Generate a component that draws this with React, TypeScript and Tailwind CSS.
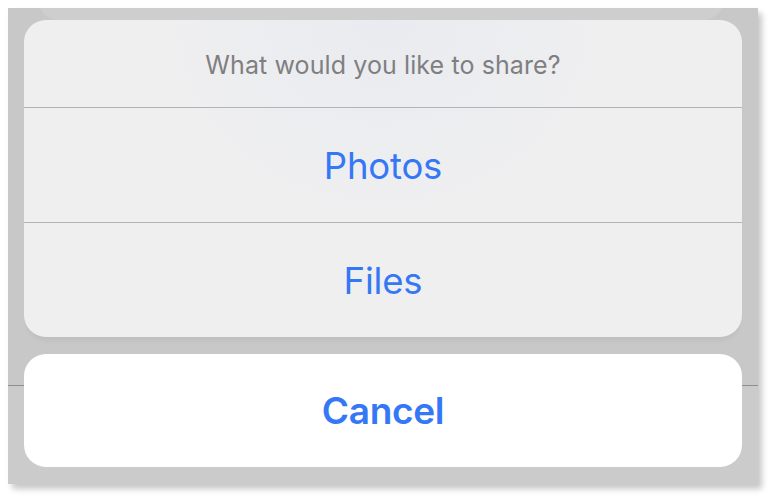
import React from 'react';

const font = { fontFamily: 'Inter, "Noto Sans", "Liberation Sans", sans-serif' };

const ActionRow: React.FC<{ label: string; last?: boolean }> = ({ label, last }) => (
  <button
    className={`flex w-full items-center justify-center pt-[3px] text-[36.5px] font-normal tracking-[-0.2px] text-[#3478f6] ${
      last ? 'h-[114px]' : 'h-[115px] border-b border-[#b3b3b5]'
    }`}
  >
    {label}
  </button>
);

export default function App() {
  return (
    <div className="min-h-screen bg-white pl-2 pt-2" style={font}>
      {/* dimmed screen behind the action sheet, with a divider of the page underneath */}
      <div className="relative h-[476px] w-[750px] overflow-hidden bg-[linear-gradient(to_bottom,#c8c8c8_377px,#8e8e8e_377px,#8e8e8e_378px,#cbcbcb_378px)] shadow-[4px_5px_6px_rgba(0,0,0,0.22)]">
        <div className="absolute left-[30px] right-[34px] top-[-30px] h-[42px] rounded-[26px] bg-[#cecece]" />

        <div className="relative flex flex-col gap-[17px] px-4 pt-3">
          <div className="overflow-hidden rounded-[22px] bg-[radial-gradient(ellipse_at_50%_0%,#e9ebf0_0%,#efeff0_45%,#efefef_100%)] shadow-[0_6px_4px_-2px_rgba(0,0,0,0.04)]">
            <div className="flex h-[88px] items-center justify-center border-b border-[#b3b3b5] pt-[4px] text-[25px] tracking-[0.1px] text-[#7f7f81]">
              What would you like to share?
            </div>
            <ActionRow label="Photos" />
            <ActionRow label="Files" last />
          </div>

          <button className="flex h-[113px] w-full items-center justify-center rounded-[22px] bg-white text-[37px] font-semibold tracking-[-0.3px] text-[#3478f6]">
            Cancel
          </button>
        </div>
      </div>
    </div>
  );
}
